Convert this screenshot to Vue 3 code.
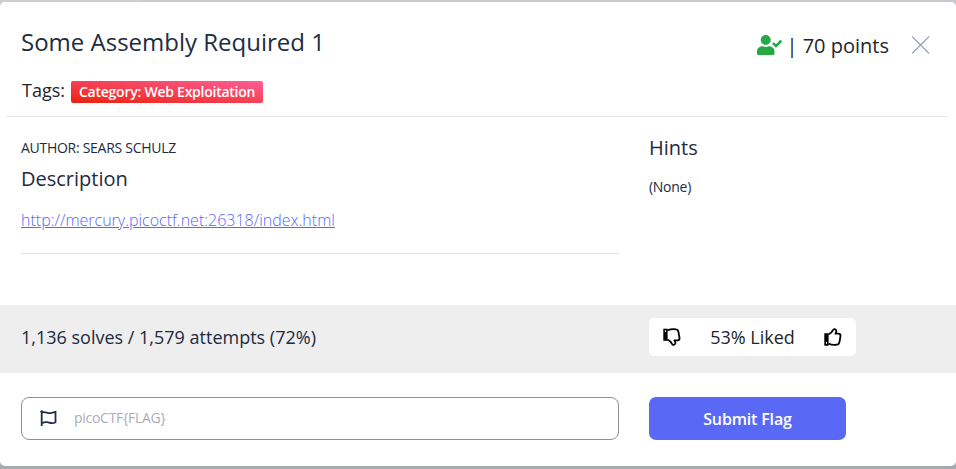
<script setup>
const tags = ['Category: Web Exploitation']
</script>

<template>
  <div class="backdrop">
    <main class="modal">
      <header class="head">
        <div class="titles">
          <h1>Some Assembly Required 1</h1>
          <div class="tags">
            <span class="tags-label">Tags:</span>
            <span v-for="tag in tags" :key="tag" class="tag">{{ tag }}</span>
          </div>
        </div>
        <div class="score">
          <svg class="user" viewBox="0 0 640 512" width="25" height="20">
            <path d="M224 256A128 128 0 1 0 224 0a128 128 0 0 0 0 256zm89.600 32h-16.700c-22.200 10.200-46.900 16-72.900 16s-50.600-5.800-72.900-16h-16.700C60.200 288 0 348.200 0 422.400V464c0 26.500 21.500 48 48 48h352c26.500 0 48-21.500 48-48v-41.600c0-74.200-60.200-134.400-134.400-134.400z" />
            <path d="M636.600 159.400l-28.200-28.300c-4.700-4.700-12.300-4.700-17 0L485.300 236.300l-46-46.400c-4.700-4.700-12.300-4.700-17 0l-28.300 28.100c-4.700 4.700-4.700 12.300 0 17l82.500 83.100c4.700 4.700 12.300 4.700 17 0L636.500 176.400c4.700-4.700 4.700-12.300.1-17z" />
          </svg>
          <span class="points">| 70 points</span>
          <svg class="close" viewBox="0 0 20 20" width="20" height="20">
            <path d="M1.100 1.500L18.100 18.500M18.100 1.500L1.100 18.500" />
          </svg>
        </div>
      </header>

      <section class="body">
        <div class="main">
          <p class="author">AUTHOR: SEARS SCHULZ</p>
          <h2 class="desc">Description</h2>
          <a class="link">http://mercury.picoctf.net:26318/index.html</a>
        </div>
        <div class="hints">
          <h2>Hints</h2>
          <p class="none">(None)</p>
        </div>
      </section>

      <section class="stats">
        <span class="solves">1,136 solves / 1,579 attempts (72%)</span>
        <div class="likes">
          <svg class="thumb" viewBox="0 0 18 18" width="18" height="18">
            <g transform="matrix(1 0 0 -1 0 18)">
              <path class="solid" d="M.3 5.200H4.600V17.300H.3z" />
              <path class="line" d="M4.400 6.500Q7.800 4.900 9 2.200Q9.700.7 11 1.200Q12.800 2 12.200 3.900L11.500 5.600H14.600Q16.700 5.800 16.500 8L15.500 13.900Q15 16.600 13 16.700C10 17.100 7.500 17 4.400 15.600" />
            </g>
            <rect class="hole" x="2" y="2.300" width="1" height="1.600" />
          </svg>
          <span class="liked">53% Liked</span>
          <svg class="thumb" viewBox="0 0 18 18" width="18" height="18">
            <path class="solid" d="M.3 5.200H4.600V17.800H.3z" />
            <path class="line" d="M4.400 6.500Q7.800 4.900 9 2.200Q9.700.7 11 1.200Q12.800 2 12.200 3.900L11.500 5.600H14.600Q16.700 5.800 16.500 8L15.500 13.900Q15 16.600 13 16.700C10 17.100 7.500 17 4.400 15.600" />
            <rect class="hole" x="2" y="14" width="1" height="1.800" />
          </svg>
        </div>
      </section>

      <form class="submit" @submit.prevent>
        <div class="field">
          <svg class="flag" viewBox="0 0 17 17" width="17" height="17">
            <path d="M1.700 1v15M1.700 2.500C5 .9 8 4 11 3Q14 2 15.500 1.800V12.200C12 14.500 9.500 12.500 7.500 12.200Q5 11.700 1.700 13.200" />
            <circle cx="1.600" cy="1.500" r="1.200" />
          </svg>
          <input type="text" placeholder="picoCTF{FLAG}" />
        </div>
        <button type="submit">Submit Flag</button>
      </form>
    </main>
  </div>
</template>

<style>
body {
  margin: 0;
}
</style>

<style scoped>
* {
  box-sizing: border-box;
}
.backdrop {
  height: 469px;
  padding: 2px 0 3px;
  background: linear-gradient(90deg, #cfcfcf 141px, #c9c8ce 141px) top / 100% 8px no-repeat, #a9a9b1;
  font-family: 'Open Sans', sans-serif;
  color: #212b42;
  overflow: hidden;
}
.modal {
  height: 464px;
  background: #fff;
  border-radius: 5px;
  overflow: hidden;
}
h1,
h2,
p {
  margin: 0;
  font-weight: 400;
}
.head {
  display: flex;
  justify-content: space-between;
  height: 115px;
  margin: 0 8px 0 6px;
  padding: 23px 17px 0 15px;
  border-bottom: 1px solid #e6e9ef;
}
h1 {
  font-size: 24px;
  line-height: 34px;
}
.tags {
  display: flex;
  align-items: center;
  gap: 6px;
  height: 22px;
  margin-top: 22px;
  padding-left: 1px;
}
.tags-label {
  padding-bottom: 4px;
  font-size: 18px;
  line-height: 22px;
  color: #212529;
}
.tag {
  height: 22px;
  padding: 0 8px;
  border-radius: 2px;
  background: linear-gradient(to top right, #ed2210, #ff5e98);
  color: #fff;
  font-size: 14px;
  font-weight: 600;
  line-height: 22px;
  letter-spacing: -0.25px;
}
.score {
  display: flex;
  align-items: center;
  height: 40px;
}
.user {
  fill: #28a745;
}
.points {
  margin-left: 5px;
  font-size: 20px;
  color: #212529;
}
.close {
  margin-left: 22px;
  stroke: #95a3be;
  stroke-width: 1.2;
  fill: none;
}
.body {
  display: grid;
  grid-template-columns: 598px 1fr;
  gap: 30px;
  height: 188px;
  padding: 20px 21px 0;
}
.main {
  height: 117px;
  border-bottom: 1px solid #e1e1e3;
}
.author {
  font-size: 14px;
  line-height: 22px;
  letter-spacing: -0.28px;
}
h2 {
  font-size: 20px;
  line-height: 22px;
}
.desc {
  margin-top: 9px;
}
.link {
  display: block;
  margin-top: 19px;
  font-size: 16px;
  font-weight: 300;
  line-height: 22px;
  color: #5867f5;
  text-decoration: underline;
}
.none {
  margin-top: 17px;
  font-size: 14px;
  line-height: 22px;
  letter-spacing: -0.28px;
}
.stats {
  display: grid;
  grid-template-columns: 598px 207px;
  gap: 30px;
  align-items: center;
  height: 68px;
  padding: 0 21px;
  background: #eee;
}
.solves {
  font-size: 18px;
  line-height: 24px;
  padding-bottom: 4px;
}
.likes {
  display: flex;
  align-items: center;
  justify-content: space-between;
  height: 38px;
  margin-bottom: 4px;
  padding: 0 14px 0 14px;
  border-radius: 5px;
  background: #fff;
}
.liked {
  font-size: 18px;
  color: #212529;
}
.solid {
  fill: #000;
}
.line {
  fill: none;
  stroke: #000;
  stroke-width: 1.8;
  stroke-linejoin: round;
}
.hole {
  fill: #fff;
}
.submit {
  display: grid;
  grid-template-columns: 598px 197px;
  gap: 30px;
  padding: 24px 21px 0;
}
.field {
  display: flex;
  align-items: center;
  height: 43px;
  padding-left: 18px;
  border: 1px solid #8f9099;
  border-radius: 8px;
}
.flag {
  fill: none;
  stroke: #212b42;
  stroke-width: 1.8;
}
.flag circle {
  fill: #212b42;
  stroke: none;
}
input {
  flex: 1;
  margin-left: 17px;
  padding: 0 0 2px;
  border: 0;
  outline: 0;
  background: transparent;
  font: 400 14px 'Open Sans', sans-serif;
  letter-spacing: -0.28px;
}
input::placeholder {
  color: #acadb8;
  opacity: 1;
}
button {
  height: 43px;
  padding: 0;
  border: 0;
  border-radius: 7px;
  background: #5969f6;
  color: #fff;
  font: 600 16px 'Open Sans', sans-serif;
  letter-spacing: -0.16px;
}
</style>
